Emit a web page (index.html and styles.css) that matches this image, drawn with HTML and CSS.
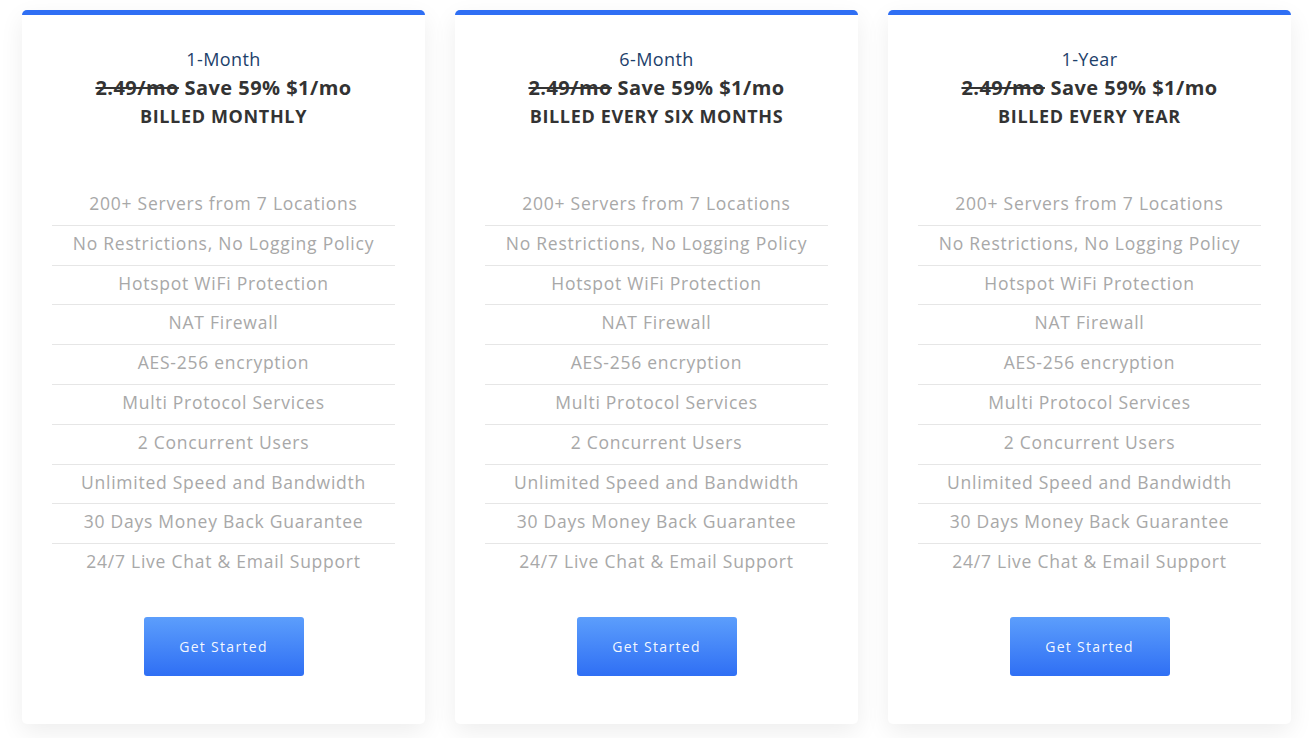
FILE: index.html
```html
<!DOCTYPE html>
<html lang="en">
<head>
<meta charset="utf-8">
<title>Pricing</title>
<link rel="stylesheet" href="styles.css">
</head>
<body>
<main class="plans">
  <section class="card">
    <header class="card-head">
      <h2 class="plan-name">1-Month</h2>
      <p class="price"><s>2.49/mo</s> Save 59% $1/mo</p>
      <p class="billing">BILLED MONTHLY</p>
    </header>
    <ul class="features">
      <li>200+ Servers from 7 Locations</li>
      <li>No Restrictions, No Logging Policy</li>
      <li>Hotspot WiFi Protection</li>
      <li>NAT Firewall</li>
      <li>AES-256 encryption</li>
      <li>Multi Protocol Services</li>
      <li>2 Concurrent Users</li>
      <li>Unlimited Speed and Bandwidth</li>
      <li>30 Days Money Back Guarantee</li>
      <li>24/7 Live Chat &amp; Email Support</li>
    </ul>
    <a class="btn" href="#">Get Started</a>
  </section>
  <section class="card">
    <header class="card-head">
      <h2 class="plan-name">6-Month</h2>
      <p class="price"><s>2.49/mo</s> Save 59% $1/mo</p>
      <p class="billing">BILLED EVERY SIX MONTHS</p>
    </header>
    <ul class="features">
      <li>200+ Servers from 7 Locations</li>
      <li>No Restrictions, No Logging Policy</li>
      <li>Hotspot WiFi Protection</li>
      <li>NAT Firewall</li>
      <li>AES-256 encryption</li>
      <li>Multi Protocol Services</li>
      <li>2 Concurrent Users</li>
      <li>Unlimited Speed and Bandwidth</li>
      <li>30 Days Money Back Guarantee</li>
      <li>24/7 Live Chat &amp; Email Support</li>
    </ul>
    <a class="btn" href="#">Get Started</a>
  </section>
  <section class="card">
    <header class="card-head">
      <h2 class="plan-name">1-Year</h2>
      <p class="price"><s>2.49/mo</s> Save 59% $1/mo</p>
      <p class="billing">BILLED EVERY YEAR</p>
    </header>
    <ul class="features">
      <li>200+ Servers from 7 Locations</li>
      <li>No Restrictions, No Logging Policy</li>
      <li>Hotspot WiFi Protection</li>
      <li>NAT Firewall</li>
      <li>AES-256 encryption</li>
      <li>Multi Protocol Services</li>
      <li>2 Concurrent Users</li>
      <li>Unlimited Speed and Bandwidth</li>
      <li>30 Days Money Back Guarantee</li>
      <li>24/7 Live Chat &amp; Email Support</li>
    </ul>
    <a class="btn" href="#">Get Started</a>
  </section>
</main>
</body>
</html>
```
FILE: styles.css
```css
* { box-sizing: border-box; }
html, body { margin: 0; padding: 0; background: #fff; }
body {
  font-family: "Open Sans", "Liberation Sans", sans-serif;
  color: #333;
}
.plans {
  display: flex;
  gap: 30px;
  padding: 10px 22px 14px;
}
.card {
  flex: 1;
  height: 714px;
  background: #fff;
  border-top: 5px solid #2f6ff4;
  border-radius: 5px;
  box-shadow: 0 8px 24px rgba(0, 0, 0, 0.07);
  padding: 30px 30px 48px;
  display: flex;
  flex-direction: column;
  align-items: center;
  text-align: center;
}
.card-head { width: 100%; }
.plan-name {
  margin: 0;
  font-size: 18px;
  font-weight: 400;
  line-height: 28px;
  color: #1d416b;
  letter-spacing: 0.4px;
}
.price {
  margin: 1px 0 0;
  font-size: 20px;
  font-weight: 700;
  line-height: 28px;
  color: #333;
  letter-spacing: 0.45px;
}
.billing {
  margin: 0;
  font-size: 18px;
  font-weight: 700;
  line-height: 28px;
  color: #333;
  letter-spacing: 0.65px;
}
.features {
  list-style: none;
  margin: 56px 0 0;
  padding: 0;
  width: 100%;
}
.features li {
  font-size: 17.5px;
  line-height: 24.8px;
  padding: 5px 0 9px;
  color: #a8a8a8;
  letter-spacing: 0.75px;
  border-bottom: 1px solid #e6e6e6;
}
.features li:last-child { border-bottom: none; }
.btn {
  margin-top: 34px;
  width: 160px;
  height: 59px;
  display: flex;
  align-items: center;
  justify-content: center;
  border-radius: 3px;
  background: linear-gradient(to bottom, #5c9efc, #2f6ff4);
  color: rgba(255, 255, 255, 0.95);
  text-decoration: none;
  font-size: 14px;
  font-weight: 400;
  letter-spacing: 1.3px;
}
```
